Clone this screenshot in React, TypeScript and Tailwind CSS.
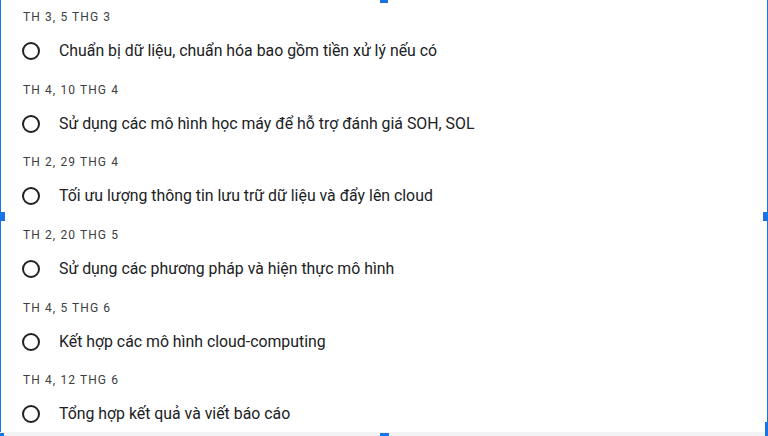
const items = [
  { date: 'TH 3, 5 THG 3', task: 'Chuẩn bị dữ liệu, chuẩn hóa bao gồm tiền xử lý nếu có' },
  { date: 'TH 4, 10 THG 4', task: 'Sử dụng các mô hình học máy để hỗ trợ đánh giá SOH, SOL' },
  { date: 'TH 2, 29 THG 4', task: 'Tối ưu lượng thông tin lưu trữ dữ liệu và đẩy lên cloud' },
  { date: 'TH 2, 20 THG 5', task: 'Sử dụng các phương pháp và hiện thực mô hình' },
  { date: 'TH 4, 5 THG 6', task: 'Kết hợp các mô hình cloud-computing' },
  { date: 'TH 4, 12 THG 6', task: 'Tổng hợp kết quả và viết báo cáo' },
];

function Radio() {
  return (
    <svg width="20" height="20" viewBox="0 0 20 20" className="shrink-0">
      <circle cx="10" cy="10" r="8" fill="none" stroke="#202124" strokeWidth="2" />
    </svg>
  );
}

export default function App() {
  return (
    <div className="relative w-[768px] h-[436px] bg-white overflow-hidden font-['Roboto',sans-serif]">
      <div className="h-[432px] border-x border-[#1a73e8] bg-white">
        <div className="flex flex-col gap-[18.7px] pt-[9px]">
          {items.map((it) => (
            <div key={it.date} className="flex flex-col gap-[14px]">
              <div className="h-4 pl-[22px] text-[12px] leading-4 tracking-[1.1px] text-[#3c4043]">{it.date}</div>
              <div className="h-6 flex items-center pl-[20px] gap-[18px]">
                <Radio />
                <span className="text-[15.85px] leading-6 text-[#202124]">{it.task}</span>
              </div>
            </div>
          ))}
        </div>
      </div>
      <div className="h-[4px] bg-[#f1f3f4]" />
      {/* selection handles */}
      <div className="absolute left-[380px] top-0 w-[8px] h-[3px] bg-[#1a73e8]" />
      <div className="absolute left-[380px] bottom-0 w-[9px] h-[3px] bg-[#1a73e8]" />
      <div className="absolute left-0 top-[212px] w-[5px] h-[9px] bg-[#1a73e8]" />
      <div className="absolute right-0 top-[212px] w-[5px] h-[9px] bg-[#1a73e8]" />
      <div className="absolute left-0 bottom-0 w-[4px] h-[3px] bg-[#1a73e8]" />
      <div className="absolute right-0 bottom-0 w-[3px] h-[14px] bg-[#1a73e8]" />
    </div>
  );
}
